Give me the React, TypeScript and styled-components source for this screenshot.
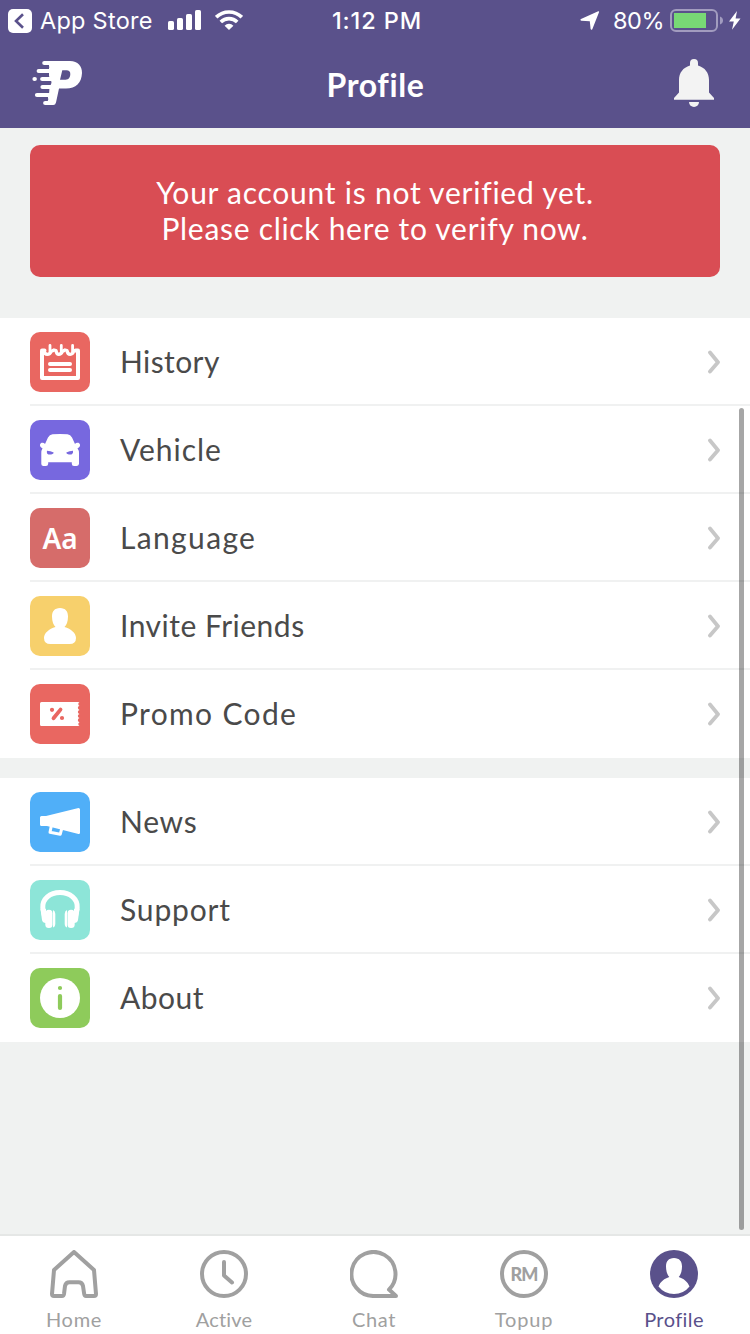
import React from "react";
import styled, { createGlobalStyle } from "styled-components";

const GlobalStyle = createGlobalStyle`
  * { box-sizing: border-box; }
  body { margin: 0; background: #f0f2f1; }
  svg { display: block; flex: none; }
`;

const Screen = styled.div`
  position: relative;
  display: flex;
  flex-direction: column;
  width: 750px;
  height: 1334px;
  overflow: hidden;
  background: #f0f2f1;
  font-family: Lato, sans-serif;
  color: #4a4a4a;
`;

const Header = styled.header`
  height: 128px;
  background: #5a518b;
  color: #fff;
`;

const StatusBar = styled.div`
  display: grid;
  grid-template-columns: 1fr auto 1fr;
  align-items: center;
  height: 40px;
  padding: 1px 9px 0 8px;
  font-family: Inter, sans-serif;
  font-size: 23.5px;
  line-height: 39px;
  white-space: nowrap;
`;

const StatusGroup = styled.div<{ $end?: boolean }>`
  display: flex;
  align-items: center;
  justify-content: ${(p) => (p.$end ? "flex-end" : "flex-start")};
`;

const StatusText = styled.span<{ $spacing: number; $weight?: number; $left?: number; $right?: number }>`
  margin-left: ${(p) => p.$left ?? 0}px;
  margin-right: ${(p) => p.$right ?? 0}px;
  font-weight: ${(p) => p.$weight ?? 400};
  letter-spacing: ${(p) => p.$spacing}px;
`;

const StatusGlyph = styled.span<{ $left: number }>`
  margin-left: ${(p) => p.$left}px;
`;

const NavBar = styled.div`
  display: grid;
  grid-template-columns: 1fr auto 1fr;
  align-items: center;
  height: 88px;
  padding: 0 30px;
`;

const Title = styled.h1`
  margin: 0;
  padding: 2px 0 0 1px;
  font-size: 32px;
  line-height: 40px;
  font-weight: 700;
  letter-spacing: 0.6px;
`;

const BellSlot = styled.div`
  display: flex;
  justify-content: flex-end;
  padding-right: 5px;
`;

const Banner = styled.button`
  display: flex;
  flex-direction: column;
  align-items: center;
  height: 132px;
  margin: 17px 30px 41px;
  padding: 29px 0 0;
  border: 0;
  border-radius: 10px;
  background: #d94d54;
  color: #fff;
  font-family: inherit;
  font-size: 30px;
  line-height: 36px;
`;

const BannerLine = styled.span<{ $spacing: number }>`
  letter-spacing: ${(p) => p.$spacing}px;
`;

const Section = styled.section`
  margin-bottom: 20px;
  background: #fff;
`;

const Row = styled.div`
  display: flex;
  align-items: center;
  height: 88px;
  margin-left: 30px;
  padding: 2px 29px 0 0;
  border-bottom: 2px solid #f0f1f1;
  &:last-child { border-bottom-color: #fff; }
`;

const Tile = styled.div<{ $color: string }>`
  display: flex;
  align-items: center;
  justify-content: center;
  width: 60px;
  height: 60px;
  border-radius: 10px;
  background: ${(p) => p.$color};
  color: #fff;
`;

const TileLetters = styled.span`
  font-family: "Noto Sans", sans-serif;
  font-size: 28px;
  font-weight: 600;
  line-height: 58px;
`;

const RowLabel = styled.span<{ $spacing: number }>`
  flex: 1;
  padding: 0 0 3px 30px;
  font-size: 30px;
  line-height: 40px;
  letter-spacing: ${(p) => p.$spacing}px;
`;

const TabBar = styled.nav`
  display: flex;
  gap: 2px;
  height: 100px;
  margin-top: auto;
  border-top: 2px solid #e5e7e6;
  background: #fff;
`;

const Tab = styled.div<{ $active?: boolean; $spacing: number }>`
  display: flex;
  flex-direction: column;
  align-items: center;
  width: 148px;
  padding-top: 14px;
  color: ${(p) => (p.$active ? "#5a518b" : "#a0a0a0")};
  font-size: 20px;
  line-height: 24px;
  letter-spacing: ${(p) => p.$spacing}px;
  svg { margin-bottom: 9px; }
`;

const ScrollThumb = styled.div`
  position: absolute;
  top: 408px;
  right: 6px;
  width: 5px;
  height: 822px;
  border-radius: 3px;
  background: rgba(0, 0, 0, 0.35);
`;

const BackIcon = () => (
  <svg width="24" height="25" viewBox="0 -1 24 25">
    <rect width="24" height="24" rx="5" fill="#fff" />
    <path d="M15 5.2 8 12l7 6.8" fill="none" stroke="#5a518b" strokeWidth="2.6" />
  </svg>
);

const SignalIcon = () => (
  <svg width="34" height="21" viewBox="0 0 34 21" fill="#fff">
    <rect x="0" y="11" width="6" height="9" rx="1.6" />
    <rect x="9" y="8" width="6" height="12" rx="1.6" />
    <rect x="18" y="4" width="6" height="16" rx="1.6" />
    <rect x="27" y="0" width="6" height="20" rx="1.6" />
  </svg>
);

const WifiIcon = () => (
  <svg width="28" height="21" viewBox="0 0 28 21">
    <g fill="none" stroke="#fff" strokeWidth="3.6">
      <path d="M1.2 7.2a18.2 18.2 0 0 1 25.6 0" />
      <path d="M5.8 12a11.6 11.6 0 0 1 16.4 0" />
    </g>
    <path d="M14 20 9.6 15.7a6.2 6.2 0 0 1 8.8 0z" fill="#fff" />
  </svg>
);

const LocationIcon = () => (
  <svg width="20" height="19" viewBox="0 0 20 19">
    <path d="M18.2 0.300Q19.500 0 19 1.300L12.300 18.300Q11.300 19.500 10.600 18L9.800 10.300 1.200 9.700Q-.4 9 1 8Z" fill="#fff" />
  </svg>
);

const BatteryIcon = () => (
  <svg width="54" height="23" viewBox="0 0 54 23">
    <rect x="1" y="1" width="46" height="21" rx="5" fill="none" stroke="#a29cbf" strokeWidth="2" />
    <rect x="4" y="4" width="32" height="15" fill="#78d875" />
    <path d="M50 7.500q3 1.200 3 4t-3 4z" fill="#a29cbf" />
  </svg>
);

const BoltIcon = () => (
  <svg width="12" height="19" viewBox="0 0 12 19">
    <path d="M8 0 0 10.500h4.800L3 18.700 11.500 7.600H6.600z" fill="#fff" />
  </svg>
);

const Logo = () => (
  <svg width="54" height="50" viewBox="30 59 54 50">
    <path
      fill="#fff"
      fillRule="evenodd"
      d="M49 61H70C78 61 82 66 82 73C81.500 83 76 88.500 66 88.500H59L56 102.500Q55.500 105 53 105H47.500L48 97Q49.500 93 49.500 88L51.500 82L49 76L49 68ZM62.300 70.300L60 79.700H65.500C69 79.700 70.300 77 70.300 74C70.300 71.500 69 70.300 66.500 70.300Z"
    />
    <g stroke="#fff" strokeWidth="4.200" strokeLinecap="round">
      <path d="M44.300 63h8M38.700 71h13M42.200 79h10M34.500 79h.3M42.500 87h10M37 95h14M45.200 103h7" />
    </g>
    <g stroke="#5a518b" strokeWidth="3.700" strokeLinecap="round">
      <path d="M43 67h4.500M39 75h8.300M41 83h8.500M42 91h4.500M41 99h5.500" />
    </g>
  </svg>
);

const BellIcon = () => (
  <svg width="42" height="50" viewBox="0 0 42 50" fill="#f3f3f3">
    <path d="M17 6.500V4a4 4 0 0 1 8 0V6.500C32 8.500 36 14 36 21V33.500L41 39V40.800H1V39L6 33.500V21C6 14 10 8.500 17 6.500Z" />
    <path d="M16 43h10a5 5 0 0 1-10 0z" />
  </svg>
);

const HistoryIcon = () => (
  <svg width="60" height="60" viewBox="0 0 60 60">
    <g fill="none" stroke="#fff">
      <path d="M12 19V46H48V19" strokeWidth="4" strokeLinejoin="round" />
      <path d="M12 18.500h2.500M46 18.500h2" strokeWidth="4" strokeLinecap="round" />
      <path d="M20 13.500V20M31.300 13.500V20M42.600 13.500V20" strokeWidth="2.800" strokeLinecap="round" />
      <path d="M14 18.500Q14.500 22.300 17.300 22.300T21 19.500L24 18L26 18.500Q26.500 22.300 28.800 22.300T32.300 19.500L35 18L37 18.500Q37.500 22.300 40.200 22.300T43.500 19.500L46 18" strokeWidth="3.300" strokeLinejoin="round" />
      <path d="M20 32H40M20 38H40" strokeWidth="4" strokeLinecap="round" />
    </g>
  </svg>
);

const VehicleIcon = () => (
  <svg width="60" height="60" viewBox="0 0 60 60">
    <path
      fill="#fff"
      d="M22.500 14.300Q30 13.500 37.500 14.300Q40.500 14.800 42 17.500L45 24Q46 22.300 48.500 22.800Q50.500 23.500 50 26Q49 28 47.500 28.300Q49 30.500 49 33V44Q48.500 46 46.500 46H44Q41.800 46 41.800 43.800V42.300H18.200V43.800Q18 46 16 46H13.500Q11.300 46 11.300 44V33Q11.300 30.500 12.500 28.300Q11 28 10 26Q9.500 23.500 11.500 22.800Q14 22.300 15 24L18 17.500Q19.500 14.800 22.500 14.300Z"
    />
    <path fill="#7768df" d="M17 30.700Q20.500 31 23.700 32.500Q23.500 34.800 18.500 34.600Q16.300 33.500 17 30.700ZM43 30.700Q39.500 31 36.300 32.500Q36.500 34.800 41.500 34.600Q43.700 33.500 43 30.700Z" />
  </svg>
);

const FriendsIcon = () => (
  <svg width="60" height="60" viewBox="0 0 60 60" fill="#fff">
    <path d="M30 12C35.500 12 38 15.500 38 20.500C38 25.500 36.500 29 34.500 31C41 33 46 37 46 42Q46 48 39.500 48H20.500Q14 48 14 42C14 37 19 33 25.500 31C23.500 29 22 25.500 22 20.500C22 15.500 24.500 12 30 12Z" />
  </svg>
);

const PromoIcon = () => (
  <svg width="60" height="60" viewBox="0 0 60 60">
    <path
      fill="#fff"
      d="M11.500 18H49.500A2.100 2.100 0 0 0 49.500 21.800 2.100 2.100 0 0 0 49.500 25.900 2.100 2.100 0 0 0 49.500 30 2.100 2.100 0 0 0 49.500 34.100 2.100 2.100 0 0 0 49.500 38.200 2.100 2.100 0 0 0 49.500 42H11.500Q10 42 10 40.500V19.500Q10 18 11.500 18Z"
    />
    <g fill="none" stroke="#e96761" strokeLinecap="round">
      <path d="M30.500 25.600 23.500 34.300" strokeWidth="3.800" />
      <path d="M22 25.800h.01M32 34h.01" strokeWidth="4.200" />
    </g>
  </svg>
);

const NewsIcon = () => (
  <svg width="60" height="60" viewBox="0 0 60 60">
    <path fill="#fff" d="M11.500 24H16L48.500 16Q50 16 50 17.500V40.500Q50 42.300 48.500 42L17 34H11.500Q10 34 10 32.500V25.500Q10 24 11.500 24Z" />
    <path d="M21.300 34 20 40.200 30.200 42.300 31.800 36.500" fill="none" stroke="#fff" strokeWidth="3" strokeLinejoin="round" />
  </svg>
);

const SupportIcon = () => (
  <svg width="60" height="60" viewBox="0 0 60 60">
    <path d="M14.500 36 12.800 28C12 19 20 12.500 30 12.500S48 19 47.200 28L45.500 36" fill="none" stroke="#fff" strokeWidth="5" />
    <path fill="#fff" d="M10.500 29H16V43Q12.500 43 12 40ZM49.500 29H44V43Q47.500 43 48 40Z" />
    <g fill="#fff">
      <rect x="15.300" y="29.700" width="7.200" height="18.300" rx="3.500" />
      <path d="M23 30Q25.300 31 25.300 34V43.500Q25.300 47 23 47.500Z" />
      <rect x="37.500" y="29.700" width="7.200" height="18.300" rx="3.500" />
      <path d="M37 30Q34.700 31 34.700 34V43.500Q34.700 47 37 47.500Z" />
    </g>
  </svg>
);

const AboutIcon = () => (
  <svg width="60" height="60" viewBox="0 0 60 60">
    <circle cx="30" cy="30" r="20" fill="#fff" />
    <path d="M30 28v12M30 20h.01" stroke="#8ecb5b" strokeWidth="4.200" strokeLinecap="round" />
  </svg>
);

const Chevron = () => (
  <svg width="14" height="24" viewBox="0 0 14 24">
    <path d="M3 2.500 11 12.200 3 21.500" fill="none" stroke="#c7c7c7" strokeWidth="3.800" strokeLinecap="round" strokeLinejoin="round" />
  </svg>
);

const tabStroke = {
  fill: "none",
  stroke: "currentColor",
  strokeWidth: 4,
  strokeLinecap: "round" as const,
  strokeLinejoin: "round" as const,
};

const HomeIcon = () => (
  <svg width="48" height="48" viewBox="0 0 48 48">
    <path {...tabStroke} d="M24 2 44 20 46 44Q46 46 44 46H36Q34.500 46 34.200 44L33 36Q32.200 32.200 28.500 32.200H19.500Q15.800 32.200 15 36L14 44Q13.700 46 12 46H4Q2 46 2 44L4 20Z" />
  </svg>
);

const ActiveIcon = () => (
  <svg width="48" height="48" viewBox="0 0 48 48">
    <circle {...tabStroke} cx="24" cy="24" r="22" />
    <path {...tabStroke} d="M24 12V25.500L32 32.500" />
  </svg>
);

const ChatIcon = () => (
  <svg width="48" height="48" viewBox="0 0 48 48">
    <path {...tabStroke} d="M24 46H46L39 39.600A22 22 0 1 0 24 46Z" />
  </svg>
);

const TopupIcon = () => (
  <svg width="48" height="48" viewBox="0 0 48 48">
    <circle {...tabStroke} cx="24" cy="24" r="22" />
    <text x="23.900" y="30.700" textAnchor="middle" fill="currentColor" fontFamily="Lato" fontSize="18" fontWeight="900" letterSpacing="-0.900">RM</text>
  </svg>
);

const ProfileIcon = () => (
  <svg width="48" height="48" viewBox="0 0 48 48">
    <circle cx="24" cy="24" r="24" fill="currentColor" />
    <path fill="#fff" d="M24 8C29.500 8 32 11.500 32 16.500C32 21 30.700 25 28.700 27C33.500 28.500 37.500 31.500 39.500 36.500Q33.500 44 24 44T8.500 36.500C10.500 31.500 14.500 28.500 19.300 27C17.300 25 16 21 16 16.500C16 11.500 18.500 8 24 8Z" />
  </svg>
);

type Item = { label: string; color: string; spacing: number; icon: React.ReactNode };

const accountItems: Item[] = [
  { label: "History", color: "#e96761", spacing: 0.4, icon: <HistoryIcon /> },
  { label: "Vehicle", color: "#7768df", spacing: 0.95, icon: <VehicleIcon /> },
  { label: "Language", color: "#d66c6a", spacing: 1.35, icon: <TileLetters>Aa</TileLetters> },
  { label: "Invite Friends", color: "#f7d06c", spacing: 0.5, icon: <FriendsIcon /> },
  { label: "Promo Code", color: "#e96761", spacing: 1.35, icon: <PromoIcon /> },
];

const infoItems: Item[] = [
  { label: "News", color: "#50aff8", spacing: 0.7, icon: <NewsIcon /> },
  { label: "Support", color: "#8de5d8", spacing: 0.85, icon: <SupportIcon /> },
  { label: "About", color: "#8ecb5b", spacing: 0.5, icon: <AboutIcon /> },
];

const tabs = [
  { label: "Home", spacing: 0.7, icon: <HomeIcon /> },
  { label: "Active", spacing: 0.2, icon: <ActiveIcon /> },
  { label: "Chat", spacing: 0.6, icon: <ChatIcon /> },
  { label: "Topup", spacing: 0.8, icon: <TopupIcon /> },
  { label: "Profile", spacing: 0.4, icon: <ProfileIcon />, active: true },
];

const Menu = ({ items }: { items: Item[] }) => (
  <Section>
    {items.map((item) => (
      <Row key={item.label}>
        <Tile $color={item.color}>{item.icon}</Tile>
        <RowLabel $spacing={item.spacing}>{item.label}</RowLabel>
        <Chevron />
      </Row>
    ))}
  </Section>
);

export default function App() {
  return (
    <Screen>
      <GlobalStyle />
      <Header>
        <StatusBar>
          <StatusGroup>
            <BackIcon />
            <StatusText $spacing={0.25} $left={8} $right={15}>App Store</StatusText>
            <SignalIcon />
            <StatusGlyph $left={13}><WifiIcon /></StatusGlyph>
          </StatusGroup>
          <StatusText $spacing={0.9} $weight={500} $left={5}>1:12 PM</StatusText>
          <StatusGroup $end>
            <LocationIcon />
            <StatusText $spacing={-0.5} $left={13} $right={6}>80%</StatusText>
            <BatteryIcon />
            <StatusGlyph $left={5}><BoltIcon /></StatusGlyph>
          </StatusGroup>
        </StatusBar>
        <NavBar>
          <Logo />
          <Title>Profile</Title>
          <BellSlot><BellIcon /></BellSlot>
        </NavBar>
      </Header>
      <Banner>
        <BannerLine $spacing={0.75}>Your account is not verified yet.</BannerLine>
        <BannerLine $spacing={0.7}>Please click here to verify now.</BannerLine>
      </Banner>
      <Menu items={accountItems} />
      <Menu items={infoItems} />
      <TabBar>
        {tabs.map((tab) => (
          <Tab key={tab.label} $active={tab.active} $spacing={tab.spacing}>
            {tab.icon}
            {tab.label}
          </Tab>
        ))}
      </TabBar>
      <ScrollThumb />
    </Screen>
  );
}
